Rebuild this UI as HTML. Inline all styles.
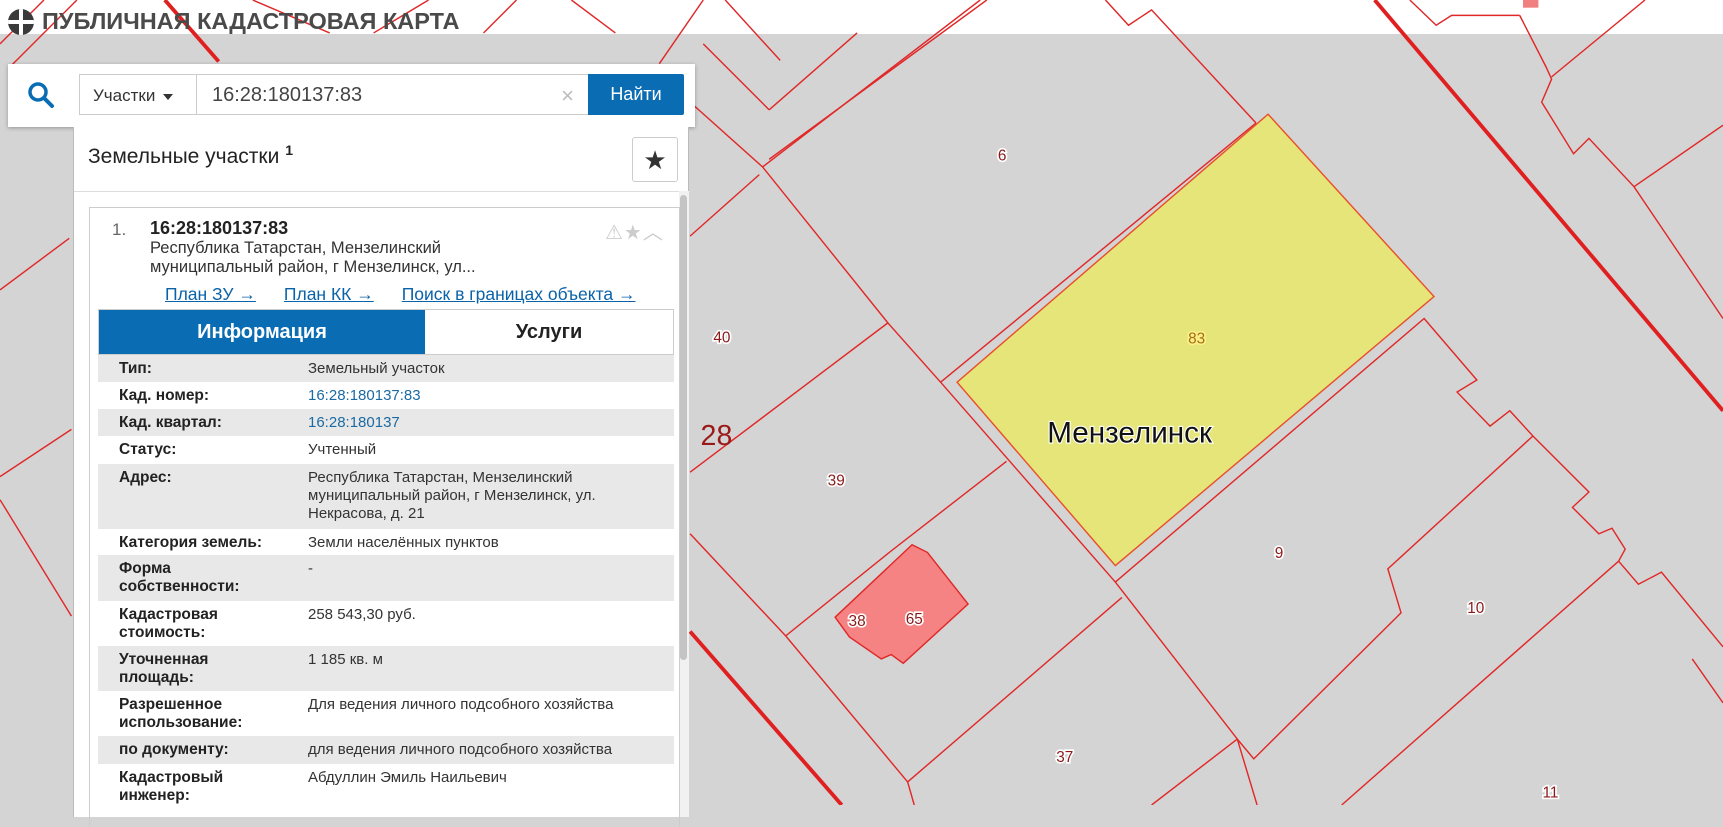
<!DOCTYPE html>
<html><head><meta charset="utf-8"><style>
*{margin:0;padding:0;box-sizing:border-box}
body{width:1723px;height:805px;overflow:hidden;position:relative;background:#d5d4d4;font-family:"Liberation Sans","DejaVu Sans",sans-serif}
#map{position:absolute;left:0;top:0}
.title{position:absolute;left:8px;top:8px;font-size:23.5px;font-weight:bold;color:#4a4a4a;display:flex;align-items:center;gap:8px}
.logo{width:26px;height:26px;border-radius:50%;background:#3a3a3a;position:relative;overflow:hidden}
.logo:before{content:"";position:absolute;left:11px;top:0;width:4px;height:26px;background:#fff}
.logo:after{content:"";position:absolute;left:0;top:11px;width:26px;height:4px;background:#fff}
.search{position:absolute;left:8px;top:64px;width:687px;height:63px;background:#fff;box-shadow:0 1px 4px rgba(0,0,0,.3)}
.drop{position:absolute;left:71px;top:10px;width:118px;height:41px;border:1px solid #ccc;font-size:17px;color:#333;padding:11px 0 0 13px}
.drop span{display:inline-block;margin-left:8px;border-left:5px solid transparent;border-right:5px solid transparent;border-top:6px solid #333;vertical-align:middle}
.inp{position:absolute;left:188px;top:10px;width:393px;height:41px;border:1px solid #ccc;border-left:none;font-size:20px;color:#444;padding:9px 0 0 16px}
.inp i{position:absolute;right:14px;top:8px;font-style:normal;color:#bbb;font-size:22px}
.btn{position:absolute;left:580px;top:10px;width:96px;height:41px;background:#0a6cb2;color:#fff;font-size:18px;text-align:center;line-height:41px;border-radius:0 2px 2px 0}
.panel{position:absolute;left:73px;top:127px;width:616px;height:690px;background:#fff;border-left:1px solid #bbb;border-right:1px solid #bbb}
.ptitle{position:absolute;left:14px;top:15px;font-size:21px;color:#222}
.ptitle sup{font-size:14px;font-weight:bold;vertical-align:8px}
.starbtn{position:absolute;left:558px;top:10px;width:46px;height:45px;border:1px solid #ccc;border-radius:3px;text-align:center;line-height:44px;font-size:26px;color:#333}
.hr{position:absolute;left:0;top:64px;width:616px;height:1px;background:#ddd}
.card{position:absolute;left:15px;top:80px;width:591px;height:620px;border:1px solid #ccc;border-bottom:none}
.num{position:absolute;left:22px;top:12px;font-size:17px;color:#666}
.cad{position:absolute;left:60px;top:10px;font-size:18px;font-weight:bold;color:#222}
.addr{position:absolute;left:60px;top:31px;font-size:16.5px;line-height:19px;color:#333}
.icons{position:absolute;left:515px;top:8px;font-size:20px;color:#ccc;letter-spacing:1px}
.links{position:absolute;left:75px;top:76px;font-size:17.5px;color:#0a62a8;white-space:nowrap}
.links a{color:#0a62a8;text-decoration:underline;margin-right:28px}
.tabs{position:absolute;left:8px;top:101px;width:576px;height:46px;border:1px solid #ccc;display:flex}
.tabs div{text-align:center;line-height:44px;font-size:20px;font-weight:bold}
.t1{width:326px;background:#0a6cb2;color:#fff}
.t2{flex:1;color:#222}
.rows{position:absolute;left:8px;top:147px;width:576px}
.r{display:flex;font-size:15.5px;line-height:18px;color:#333;padding:5px 0 0 0}
.r:nth-child(odd){background:#e8e8e8}
.r b{width:210px;flex:none;padding-left:21px;color:#222}
.r span{flex:1;font-size:15px}
.r .l{color:#1b6aa3}
.sb{position:absolute;left:606px;top:68px;width:7px;height:465px;background:#c4c4c4;border-radius:4px}
.sbw{position:absolute;left:605px;top:64px;width:10px;height:626px;background:#f1f1f1}
</style></head><body>
<svg id="map" width="1723" height="805" viewBox="0 0 1568 733" preserveAspectRatio="none">
<rect x="0" y="0" width="1568" height="31" fill="#fff"/>
<rect x="0" y="31" width="1568" height="702" fill="#d5d4d4"/>
<g fill="none" stroke="#e02828" stroke-width="1.3">
<polyline points="628,93 694,152 808,294 856,348 1015,530 1126,673 1144,733"/>
<polyline points="694,152 892,0"/><polyline points="700,145 898,0"/>
<polyline points="628,215 691,159"/>
<polyline points="628,430 808,294"/>
<polyline points="856,348 1143,112"/>
<polyline points="1006,0 1027,23 1048,9 1143,112"/>
<polyline points="916,420 808,504 715,579"/>
<polyline points="1015,530 1296,290 1344,346 1326,357 1356,388 1374,374 1395,397 1446,448 1431,462 1455,486 1467,481 1479,500 1473,511 1491,532 1512,521 1568,589"/>
<polyline points="1395,397 1263,518 1275,558 1141,691 1126,673"/>
<polyline points="1021,544 826,712"/>
<polyline points="1473,511 1221,733"/>
<polyline points="1126,673 1048,733"/>
<polyline points="628,486 715,579 826,712 832,733"/>
<polyline points="1383,14 1407,61 1412,72 1403,93 1432,140 1446,126 1487,170 1568,290"/>
<polyline points="1487,170 1568,114"/>
<polyline points="1412,70 1497,0"/>
<polyline points="1283,0 1307,23 1321,14 1383,14"/>
<polyline points="1540,600 1568,640"/>
<polyline points="0,434 65,391"/><polyline points="0,455 65,561"/><polyline points="63,217 0,264"/>
<polyline points="0,40 40,0"/><polyline points="10,60 70,0"/><polyline points="230,0 300,30"/><polyline points="340,30 390,0"/><polyline points="440,30 470,0"/><polyline points="520,0 560,30"/><polyline points="600,58 640,0"/><polyline points="660,0 710,55"/>
<polyline points="700,100 780,30"/><polyline points="640,40 700,100"/>
</g>
<g stroke="#e02020" stroke-width="3.5" fill="none">
<line x1="628" y1="575" x2="766" y2="733"/>
<line x1="1251" y1="0" x2="1568" y2="374"/>
<line x1="150" y1="0" x2="199" y2="56"/>
</g>
<rect x="1386" y="0" width="14" height="7" fill="#f08080"/>
<polygon points="871,348 1154,104 1305,270 1015,515" fill="#e6e57a" stroke="#e8502a" stroke-width="1.3"/>
<polygon points="760,562 830,496 844,503 881,550 822,604 811,596 802,600 773,580" fill="#f58383" stroke="#e02828" stroke-width="1.3"/>
<g font-family="Liberation Sans,sans-serif" font-size="14" fill="#8a1a1a" stroke="#fff" stroke-width="3" paint-order="stroke" text-anchor="middle">
<text x="912" y="146">6</text><text x="657" y="312">40</text><text x="761" y="442">39</text><text x="1164" y="508">9</text><text x="1343" y="558">10</text><text x="780" y="570">38</text><text x="832" y="568">65</text><text x="969" y="694">37</text><text x="1411" y="726">11</text>
<text x="1089" y="313" fill="#a07010" stroke="#fff08a">83</text>
<text x="652" y="405" font-size="26" stroke="none" fill="#9a1a1a">28</text>
<text x="1028" y="403" font-size="27" fill="#111" stroke="#fff" stroke-width="2">Мензелинск</text>
</g>
</svg>
<div class="title"><div class="logo"></div>ПУБЛИЧНАЯ КАДАСТРОВАЯ КАРТА</div>
<div class="search">
<svg style="position:absolute;left:19px;top:17px" width="28" height="28" viewBox="0 0 28 28"><circle cx="11" cy="11" r="8" fill="none" stroke="#0a6cb2" stroke-width="3.5"/><line x1="17" y1="17" x2="25" y2="25" stroke="#0a6cb2" stroke-width="4" stroke-linecap="round"/></svg>
<div class="drop">Участки<span></span></div>
<div class="inp">16:28:180137:83<i>×</i></div>
<div class="btn">Найти</div>
</div>
<div class="panel">
<div class="ptitle">Земельные участки <sup>1</sup></div>
<div class="starbtn">★</div>
<div class="hr"></div>
<div class="sbw"></div><div class="sb"></div>
<div class="card">
<div class="num">1.</div>
<div class="cad">16:28:180137:83</div>
<div class="addr">Республика Татарстан, Мензелинский<br>муниципальный район, г Мензелинск, ул...</div>
<div class="icons">⚠★︿</div>
<div class="links"><a>План ЗУ →</a><a>План КК →</a><a style="margin:0">Поиск в границах объекта →</a></div>
<div class="tabs"><div class="t1">Информация</div><div class="t2">Услуги</div></div>
<div class="rows">
<div class="r" style="height:27px"><b>Тип:</b><span>Земельный участок</span></div>
<div class="r" style="height:27px"><b>Кад. номер:</b><span class="l">16:28:180137:83</span></div>
<div class="r" style="height:27px"><b>Кад. квартал:</b><span class="l">16:28:180137</span></div>
<div class="r" style="height:28px"><b>Статус:</b><span>Учтенный</span></div>
<div class="r" style="height:65px"><b>Адрес:</b><span>Республика Татарстан, Мензелинский<br>муниципальный район, г Мензелинск, ул.<br>Некрасова, д. 21</span></div>
<div class="r" style="height:26px"><b>Категория земель:</b><span>Земли населённых пунктов</span></div>
<div class="r" style="height:46px"><b>Форма<br>собственности:</b><span>-</span></div>
<div class="r" style="height:45px"><b>Кадастровая<br>стоимость:</b><span>258 543,30 руб.</span></div>
<div class="r" style="height:45px"><b>Уточненная<br>площадь:</b><span>1 185 кв. м</span></div>
<div class="r" style="height:45px"><b>Разрешенное<br>использование:</b><span>Для ведения личного подсобного хозяйства</span></div>
<div class="r" style="height:28px"><b>по документу:</b><span>для ведения личного подсобного хозяйства</span></div>
<div class="r" style="height:45px"><b>Кадастровый<br>инженер:</b><span>Абдуллин Эмиль Наильевич</span></div>
</div>
</div>
</div>
</body></html>
